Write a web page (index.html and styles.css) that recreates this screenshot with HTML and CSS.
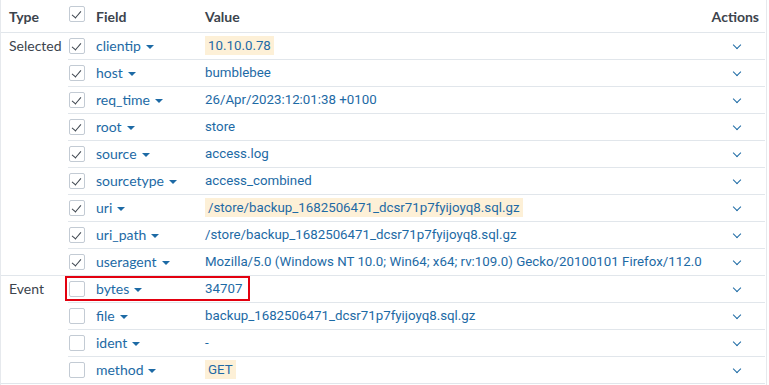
FILE: index.html
```html
<!DOCTYPE html>
<html lang="en">
<head>
    <meta charset="UTF-8">
    <title>Event fields</title>
    <link rel="stylesheet" href="styles.css">
</head>
<body>
    <div class="fields">
        <table class="field-table">
            <colgroup>
                <col class="col-type">
                <col class="col-check">
                <col class="col-field">
                <col>
                <col class="col-actions">
            </colgroup>
            <thead>
                <tr>
                    <th class="type">Type</th>
                    <th class="check"><span class="box checked"></span></th>
                    <th>Field</th>
                    <th>Value</th>
                    <th class="actions">Actions</th>
                </tr>
            </thead>
            <tbody>
                <tr class="group-start">
                    <td class="type" rowspan="9">Selected</td>
                    <td class="check"><span class="box checked"></span></td>
                    <td><span class="name">clientip</span><span class="caret"></span></td>
                    <td><span class="value hl">10.10.0.78</span></td>
                    <td class="actions"><span class="chev"></span></td>
                </tr>
                <tr>
                    <td class="check"><span class="box checked"></span></td>
                    <td><span class="name">host</span><span class="caret"></span></td>
                    <td><span class="value">bumblebee</span></td>
                    <td class="actions"><span class="chev"></span></td>
                </tr>
                <tr>
                    <td class="check"><span class="box checked"></span></td>
                    <td><span class="name">req_time</span><span class="caret"></span></td>
                    <td><span class="value">26/Apr/2023:12:01:38 +0100</span></td>
                    <td class="actions"><span class="chev"></span></td>
                </tr>
                <tr>
                    <td class="check"><span class="box checked"></span></td>
                    <td><span class="name">root</span><span class="caret"></span></td>
                    <td><span class="value">store</span></td>
                    <td class="actions"><span class="chev"></span></td>
                </tr>
                <tr>
                    <td class="check"><span class="box checked"></span></td>
                    <td><span class="name">source</span><span class="caret"></span></td>
                    <td><span class="value">access.log</span></td>
                    <td class="actions"><span class="chev"></span></td>
                </tr>
                <tr>
                    <td class="check"><span class="box checked"></span></td>
                    <td><span class="name">sourcetype</span><span class="caret"></span></td>
                    <td><span class="value">access_combined</span></td>
                    <td class="actions"><span class="chev"></span></td>
                </tr>
                <tr>
                    <td class="check"><span class="box checked"></span></td>
                    <td><span class="name">uri</span><span class="caret"></span></td>
                    <td><span class="value hl">/store/backup_1682506471_dcsr71p7fyijoyq8.sql.gz</span></td>
                    <td class="actions"><span class="chev"></span></td>
                </tr>
                <tr>
                    <td class="check"><span class="box checked"></span></td>
                    <td><span class="name">uri_path</span><span class="caret"></span></td>
                    <td><span class="value">/store/backup_1682506471_dcsr71p7fyijoyq8.sql.gz</span></td>
                    <td class="actions"><span class="chev"></span></td>
                </tr>
                <tr>
                    <td class="check"><span class="box checked"></span></td>
                    <td><span class="name">useragent</span><span class="caret"></span></td>
                    <td><span class="value">Mozilla/5.0 (Windows NT 10.0; Win64; x64; rv:109.0) Gecko/20100101 Firefox/112.0</span></td>
                    <td class="actions"><span class="chev"></span></td>
                </tr>
                <tr class="group-start">
                    <td class="type" rowspan="4">Event</td>
                    <td class="check"><span class="box"></span></td>
                    <td><span class="name">bytes</span><span class="caret"></span></td>
                    <td><span class="value">34707</span></td>
                    <td class="actions"><span class="chev"></span></td>
                </tr>
                <tr>
                    <td class="check"><span class="box"></span></td>
                    <td><span class="name">file</span><span class="caret"></span></td>
                    <td><span class="value">backup_1682506471_dcsr71p7fyijoyq8.sql.gz</span></td>
                    <td class="actions"><span class="chev"></span></td>
                </tr>
                <tr>
                    <td class="check"><span class="box"></span></td>
                    <td><span class="name">ident</span><span class="caret"></span></td>
                    <td><span class="value">-</span></td>
                    <td class="actions"><span class="chev"></span></td>
                </tr>
                <tr>
                    <td class="check"><span class="box"></span></td>
                    <td><span class="name">method</span><span class="caret"></span></td>
                    <td><span class="value hl">GET</span></td>
                    <td class="actions"><span class="chev"></span></td>
                </tr>
            </tbody>
        </table>
        <div class="mark"></div>
    </div>
</body>
</html>
```

FILE: styles.css
```css
* {
    margin: 0;
    padding: 0;
    box-sizing: border-box;
}
body {
    font-family: Lato, "Liberation Sans", sans-serif;
    font-size: 14px;
    color: #3c444d;
    background: #fff;
}
.fields {
    position: relative;
    width: 767px;
    height: 385px;
    border-left: 1px solid #e6e9ed;
    border-right: 1px solid #e6e9ed;
    overflow: hidden;
}
.field-table {
    width: 100%;
    table-layout: fixed;
    border-collapse: collapse;
    margin-left: -1px;
}
.col-type {
    width: 68px;
}
.col-check {
    width: 28px;
}
.col-field {
    width: 109px;
}
.col-actions {
    width: 58px;
}
th {
    height: 32px;
    text-align: left;
    font-weight: 700;
    vertical-align: bottom;
    padding-bottom: 7px;
    border-bottom: 1px solid #e1e6eb;
    white-space: nowrap;
}
th.type {
    padding-left: 9px;
}
th.check {
    vertical-align: top;
    padding: 6px 0 0 1px;
}
th.actions {
    text-align: right;
    padding-right: 6px;
}
td {
    height: 27px;
    border-bottom: 1px solid #e1e6eb;
    vertical-align: middle;
    white-space: nowrap;
    color: #1d6aa5;
}
td.type {
    vertical-align: top;
    padding: 4px 0 0 9px;
    color: #3c444d;
}
td.check {
    padding-left: 1px;
}
.box {
    position: relative;
    display: block;
    width: 16px;
    height: 16px;
    border: 1px solid #c3cbd4;
    border-radius: 2px;
    background: #fff;
}
.box.checked::after {
    content: "";
    position: absolute;
    left: 4px;
    top: 2px;
    width: 4px;
    height: 8px;
    border-right: 1.5px solid #3c444d;
    border-bottom: 1.5px solid #3c444d;
    transform: rotate(40deg);
}
.name {
    color: #1d6aa5;
}
.caret {
    display: inline-block;
    width: 0;
    height: 0;
    margin-left: 5px;
    vertical-align: 2px;
    border-left: 4px solid transparent;
    border-right: 4px solid transparent;
    border-top: 4px solid #1d6aa5;
}
.value {
    display: inline-block;
    padding: 2px 0;
    font-family: Roboto, "Liberation Sans", sans-serif;
    font-size: 13.3px;
}
.value.hl {
    background: #fdf0d7;
    padding: 2px 3px;
}
td.actions {
    text-align: center;
    padding-left: 2px;
}
.chev {
    display: inline-block;
    width: 6px;
    height: 6px;
    border-right: 1.5px solid #1d6aa5;
    border-bottom: 1.5px solid #1d6aa5;
    transform: rotate(45deg);
    vertical-align: 3px;
}
.mark {
    position: absolute;
    left: 64px;
    top: 276px;
    width: 185px;
    height: 25px;
    border: 2px solid #e3000f;
}
```
